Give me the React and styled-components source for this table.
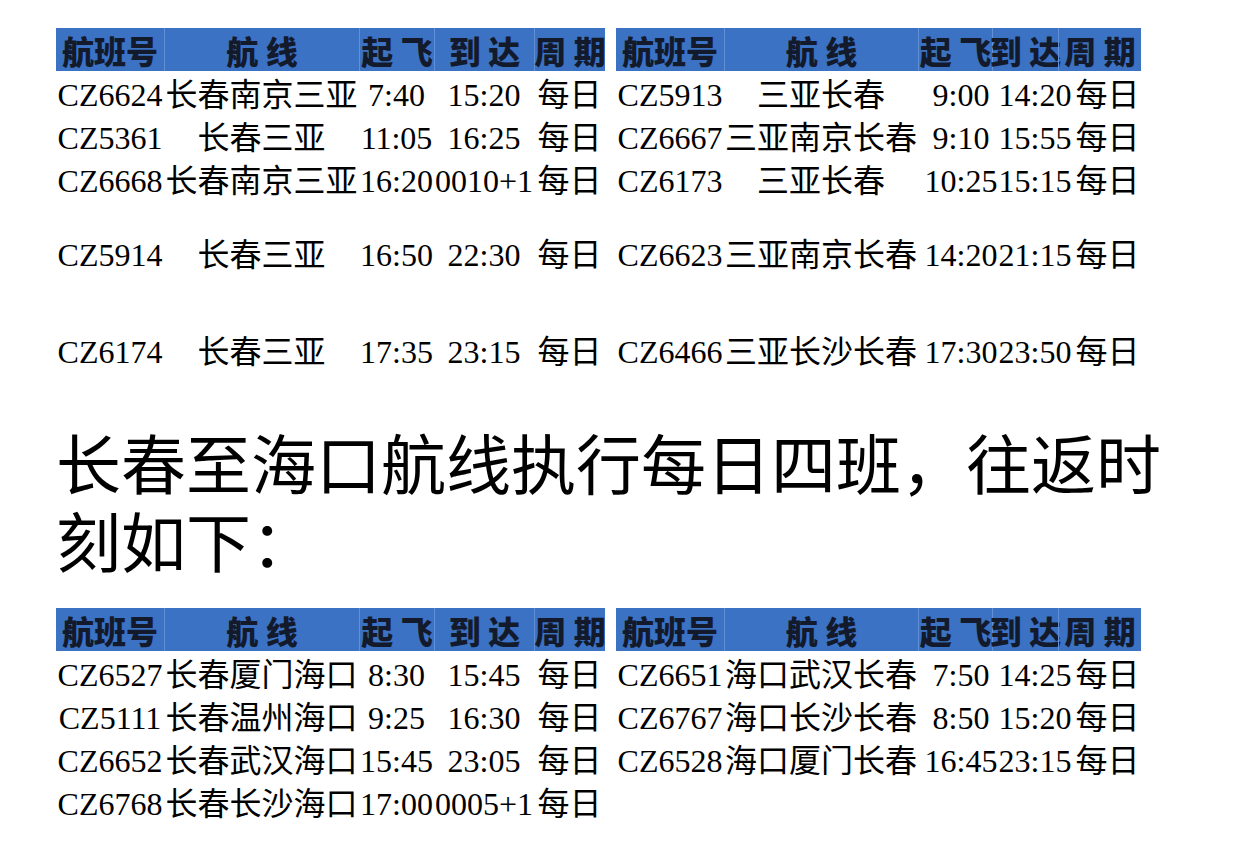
import React from "react";
import styled, { createGlobalStyle } from "styled-components";

const Global = createGlobalStyle`
  html, body { margin: 0; padding: 0; background: #ffffff; }
  body { font-family: "Liberation Serif", "Noto Sans CJK SC", serif; color: #000; }
`;

const Page = styled.div`
  padding: 28px 0 0 56px;
  width: 1184px;
  box-sizing: border-box;
`;

const TablePair = styled.div`
  display: flex;
  gap: 11px;
  align-items: flex-start;
`;

const Table = styled.div`
  display: flex;
  flex-direction: column;
`;

const HeadRow = styled.div`
  display: flex;
  height: 43px;
  background: #3b72c4;
`;

const HeadCell = styled.div`
  width: ${(p) => p.$w}px;
  flex: none;
  box-sizing: border-box;
  display: flex;
  align-items: center;
  justify-content: center;
  white-space: nowrap;
  font-family: "Noto Sans CJK SC", sans-serif;
  font-weight: 900;
  font-size: 32px;
  color: #131a2c;
  border-left: ${(p) => (p.$first ? "none" : "1px solid #6190d6")};
`;

const Row = styled.div`
  display: flex;
  height: 43px;
  margin-top: ${(p) => p.$gap || 0}px;
`;

const Cell = styled.div`
  width: ${(p) => p.$w}px;
  flex: none;
  box-sizing: border-box;
  padding-top: 6px;
  padding-left: ${(p) => p.$shift || 0}px;
  display: flex;
  align-items: center;
  justify-content: center;
  white-space: nowrap;
  font-family: "Liberation Serif", "Noto Sans CJK SC", serif;
  font-size: 32px;
  line-height: 37px;
  color: #000;
`;

const Title = styled.h1`
  margin: 51px 0 30px 0;
  width: 1130px;
  font-family: "Noto Sans CJK SC", sans-serif;
  font-weight: 400;
  font-size: 65px;
  line-height: 78px;
  color: #000;
`;

const HEADERS = ["航班号", "航 线", "起 飞", "到 达", "周 期"];

const leftCols = [
  { w: 108 },
  { w: 195 },
  { w: 75 },
  { w: 100 },
  { w: 71 },
];

const rightCols = [
  { w: 108 },
  { w: 194 },
  { w: 74, s: 12 },
  { w: 66, s: 20 },
  { w: 83, s: 16 },
];

const topLeft = [
  { d: ["CZ6624", "长春南京三亚", "7:40", "15:20", "每日"] },
  { d: ["CZ5361", "长春三亚", "11:05", "16:25", "每日"] },
  { d: ["CZ6668", "长春南京三亚", "16:20", "0010+1", "每日"] },
  { d: ["CZ5914", "长春三亚", "16:50", "22:30", "每日"], gap: 31 },
  { d: ["CZ6174", "长春三亚", "17:35", "23:15", "每日"], gap: 54 },
];

const topRight = [
  { d: ["CZ5913", "三亚长春", "9:00", "14:20", "每日"] },
  { d: ["CZ6667", "三亚南京长春", "9:10", "15:55", "每日"] },
  { d: ["CZ6173", "三亚长春", "10:25", "15:15", "每日"] },
  { d: ["CZ6623", "三亚南京长春", "14:20", "21:15", "每日"], gap: 31 },
  { d: ["CZ6466", "三亚长沙长春", "17:30", "23:50", "每日"], gap: 54 },
];

const bottomLeft = [
  { d: ["CZ6527", "长春厦门海口", "8:30", "15:45", "每日"] },
  { d: ["CZ5111", "长春温州海口", "9:25", "16:30", "每日"] },
  { d: ["CZ6652", "长春武汉海口", "15:45", "23:05", "每日"] },
  { d: ["CZ6768", "长春长沙海口", "17:00", "0005+1", "每日"] },
];

const bottomRight = [
  { d: ["CZ6651", "海口武汉长春", "7:50", "14:25", "每日"] },
  { d: ["CZ6767", "海口长沙长春", "8:50", "15:20", "每日"] },
  { d: ["CZ6528", "海口厦门长春", "16:45", "23:15", "每日"] },
];

function FlightTable({ cols, rows }) {
  return (
    <Table>
      <HeadRow>
        {HEADERS.map((h, i) => (
          <HeadCell key={i} $w={cols[i].w} $first={i === 0}>
            {h}
          </HeadCell>
        ))}
      </HeadRow>
      {rows.map((r, ri) => (
        <Row key={ri} $gap={r.gap}>
          {r.d.map((v, ci) => (
            <Cell key={ci} $w={cols[ci].w} $shift={cols[ci].s}>
              {v}
            </Cell>
          ))}
        </Row>
      ))}
    </Table>
  );
}

export default function App() {
  return (
    <>
      <Global />
      <Page>
        <TablePair>
          <FlightTable cols={leftCols} rows={topLeft} />
          <FlightTable cols={rightCols} rows={topRight} />
        </TablePair>
        <Title>长春至海口航线执行每日四班，往返时刻如下：</Title>
        <TablePair>
          <FlightTable cols={leftCols} rows={bottomLeft} />
          <FlightTable cols={rightCols} rows={bottomRight} />
        </TablePair>
      </Page>
    </>
  );
}
